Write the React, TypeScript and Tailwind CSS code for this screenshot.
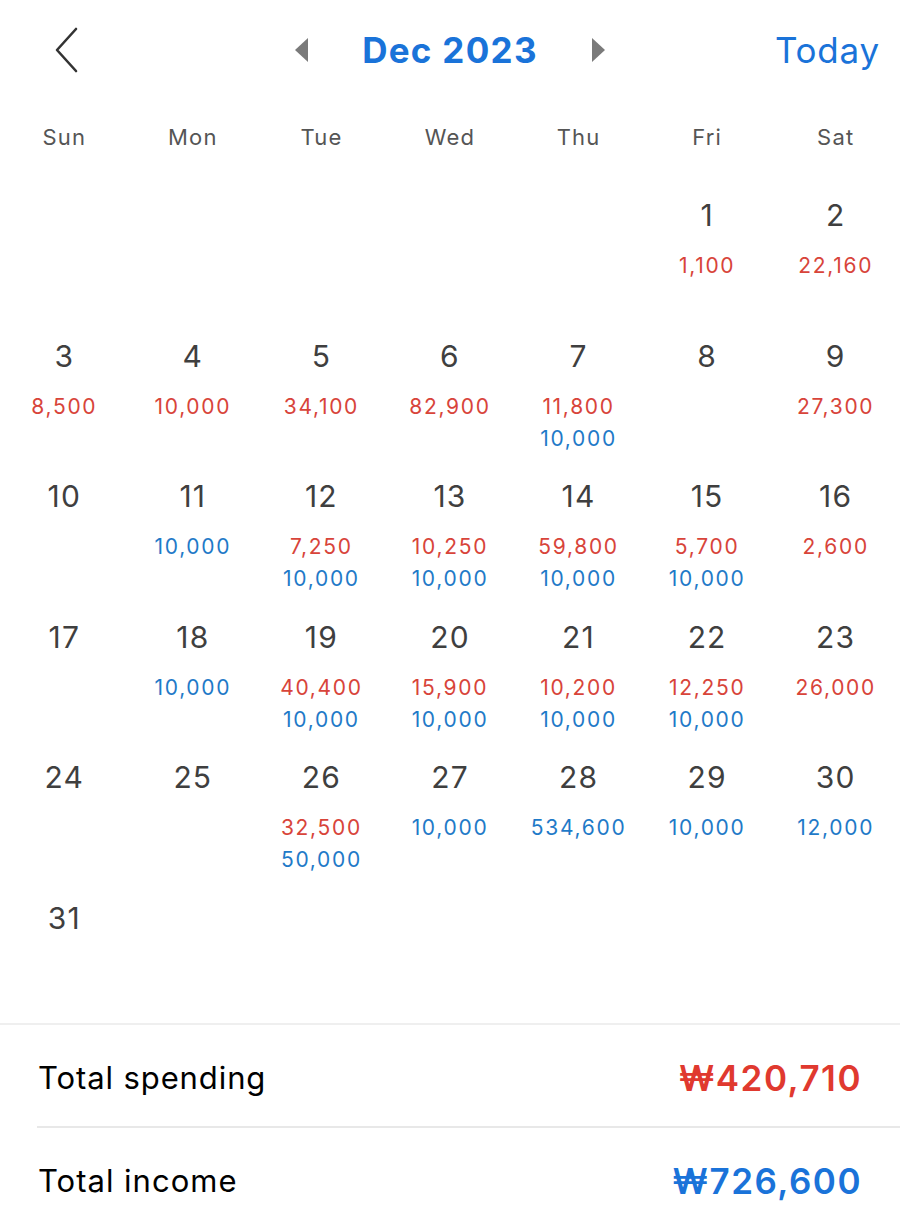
import React from 'react';

type Day = { d: number; out?: string; inc?: string } | null;

const days: Day[] = [
  null, null, null, null, null,
  { d: 1, out: '1,100' },
  { d: 2, out: '22,160' },
  { d: 3, out: '8,500' },
  { d: 4, out: '10,000' },
  { d: 5, out: '34,100' },
  { d: 6, out: '82,900' },
  { d: 7, out: '11,800', inc: '10,000' },
  { d: 8 },
  { d: 9, out: '27,300' },
  { d: 10 },
  { d: 11, inc: '10,000' },
  { d: 12, out: '7,250', inc: '10,000' },
  { d: 13, out: '10,250', inc: '10,000' },
  { d: 14, out: '59,800', inc: '10,000' },
  { d: 15, out: '5,700', inc: '10,000' },
  { d: 16, out: '2,600' },
  { d: 17 },
  { d: 18, inc: '10,000' },
  { d: 19, out: '40,400', inc: '10,000' },
  { d: 20, out: '15,900', inc: '10,000' },
  { d: 21, out: '10,200', inc: '10,000' },
  { d: 22, out: '12,250', inc: '10,000' },
  { d: 23, out: '26,000' },
  { d: 24 },
  { d: 25 },
  { d: 26, out: '32,500', inc: '50,000' },
  { d: 27, inc: '10,000' },
  { d: 28, inc: '534,600' },
  { d: 29, inc: '10,000' },
  { d: 30, inc: '12,000' },
  { d: 31 },
  null, null, null, null, null, null,
];

const weekdays = ['Sun', 'Mon', 'Tue', 'Wed', 'Thu', 'Fri', 'Sat'];

export default function App() {
  return (
    <div className="w-[900px] h-[1213px] overflow-hidden bg-white" style={{ fontFamily: 'Inter, "Noto Sans", sans-serif' }}>
      {/* Header */}
      <div className="h-[100px] grid grid-cols-[1fr_auto_1fr] items-center pl-[54px] pr-[20px]">
        <div className="flex">
          <svg width="26" height="46" viewBox="0 0 26 46">
            <polyline points="22,2 3,23 22,44" fill="none" stroke="#333" strokeWidth="2.6" strokeLinecap="round" strokeLinejoin="round" />
          </svg>
        </div>
        <div className="flex items-center -translate-x-[17px]">
          <svg width="16" height="24" viewBox="0 0 16 24">
            <polygon points="14,0 14,24 1,12" fill="#7a7a7a" />
          </svg>
          <span className="mx-[52px] text-[35px] font-bold text-[#1a73d9] tracking-[1.3px]">Dec 2023</span>
          <svg width="16" height="24" viewBox="0 0 16 24">
            <polygon points="2,0 2,24 15,12" fill="#7a7a7a" />
          </svg>
        </div>
        <div className="flex justify-end">
          <span className="text-[35px] text-[#1a73d9] tracking-[0.8px]">Today</span>
        </div>
      </div>

      {/* Weekdays */}
      <div className="grid grid-cols-7 h-[75px]">
        {weekdays.map((w) => (
          <div key={w} className="flex items-center justify-center text-[22px] text-[#555] tracking-[1.2px] pb-[1px]">{w}</div>
        ))}
      </div>

      {/* Calendar grid */}
      <div className="grid grid-cols-7">
        {days.map((day, i) => (
          <div key={i} className="h-[140.6px] flex flex-col items-center pt-[22px]">
            {day && (
              <>
                <span className="text-[30px] leading-[36px] text-[#3f3f3f] tracking-[1.2px]">{day.d}</span>
                <div className="mt-[17px] flex flex-col items-center text-[21px] leading-[32px] tracking-[1.7px]">
                  {day.out && <span className="text-[#d8443a]">{day.out}</span>}
                  {day.inc && <span className="text-[#1f7ac8]">{day.inc}</span>}
                </div>
              </>
            )}
          </div>
        ))}
      </div>

      {/* Totals */}
      <div className="border-t-2 border-[#efefef] mt-[4px] pl-[37px]">
        <div className="h-[103px] pt-[6px] flex items-center justify-between pl-[1px] pr-[38px] border-b-2 border-[#e8e8e8]">
          <span className="text-[31px] text-black tracking-[0.9px]">Total spending</span>
          <span className="text-[35px] font-semibold text-[#e0392f] tracking-[1.5px]">₩420,710</span>
        </div>
        <div className="h-[102px] pt-[6px] flex items-center justify-between pl-[1px] pr-[38px]">
          <span className="text-[31px] text-black tracking-[1px]">Total income</span>
          <span className="text-[35px] font-semibold text-[#1a73d9] tracking-[1.5px]">₩726,600</span>
        </div>
      </div>
    </div>
  );
}
